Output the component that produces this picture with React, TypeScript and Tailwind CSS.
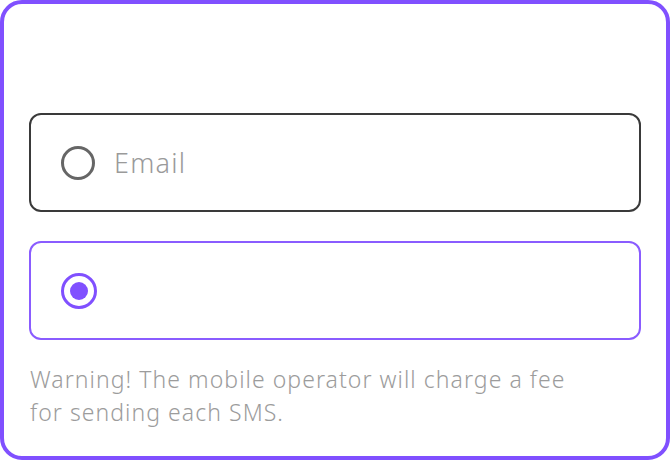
import React from "react";

export default function App() {
  return (
    <div className="w-[670px] h-[460px] bg-white">
      <div
        className="w-[670px] h-[460px] border-4 border-[#8050ff] rounded-[22px] pt-[109px] px-[25px] flex flex-col"
        style={{ fontFamily: '"Noto Sans", "Open Sans", sans-serif' }}
      >
        <div className="h-[99px] border-2 border-[#3a3a3a] rounded-[12px] flex items-center pl-[30px]">
          <div className="w-[34px] h-[34px] rounded-full border-[3px] border-[#666666]" />
          <span className="ml-[19px] text-[27px] font-light tracking-[1.2px] text-[#9a9a9a] leading-none">Email</span>
        </div>
        <div className="mt-[29px] h-[99px] border-2 border-[#8a5cff] rounded-[12px] flex items-center pl-[30px]">
          <div className="w-[36px] h-[36px] rounded-full border-[3px] border-[#8050ff] flex items-center justify-center">
            <div className="w-[18px] h-[18px] rounded-full bg-[#8050ff]" />
          </div>
        </div>
        <p className="mt-[23px] text-[23px] font-light leading-[33px] tracking-[1.05px] text-[#9c9c9c] pl-[1px]">
          Warning! The mobile operator will charge a fee
          <br />
          for sending each SMS.
        </p>
      </div>
    </div>
  );
}
